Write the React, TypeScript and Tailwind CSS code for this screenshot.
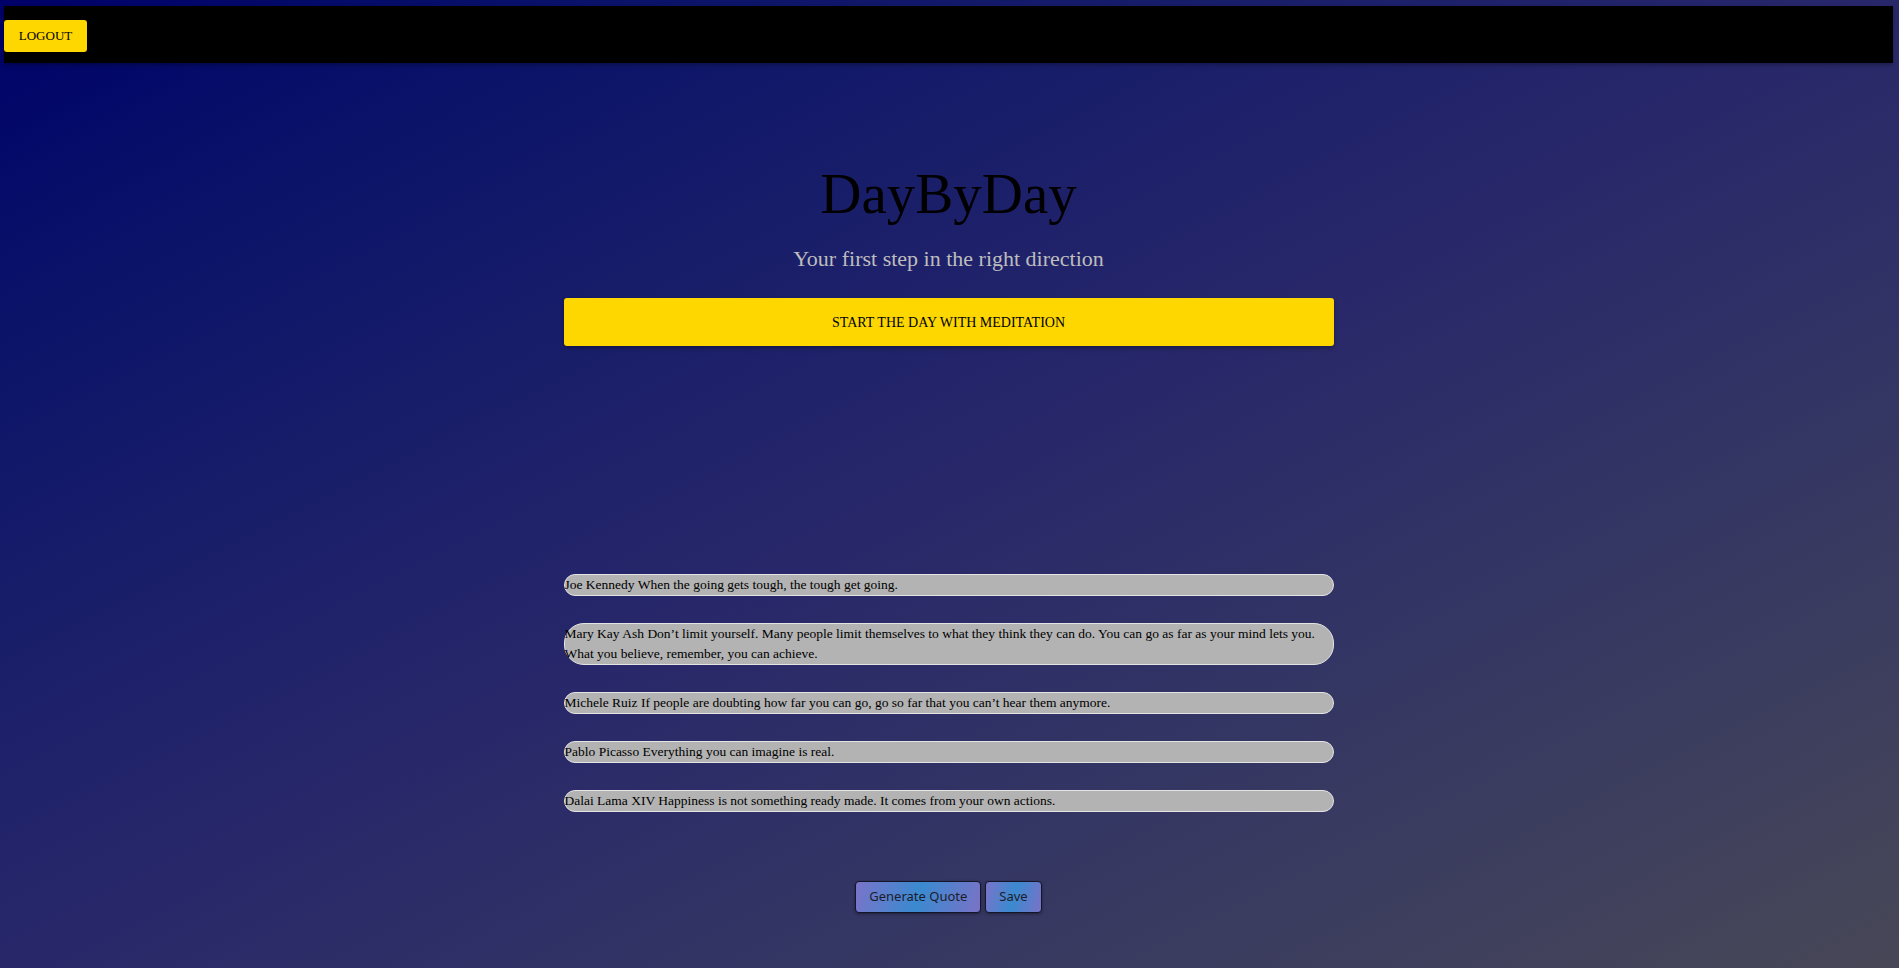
import React from 'react';

const quotes = [
    { author: 'Joe Kennedy', text: 'When the going gets tough, the tough get going.' },
    {
        author: 'Mary Kay Ash',
        text: 'Don’t limit yourself. Many people limit themselves to what they think they can do. You can go as far as your mind lets you. What you believe, remember, you can achieve.'
    },
    { author: 'Michele Ruiz', text: 'If people are doubting how far you can go, go so far that you can’t hear them anymore.' },
    { author: 'Pablo Picasso', text: 'Everything you can imagine is real.' },
    { author: 'Dalai Lama XIV', text: 'Happiness is not something ready made. It comes from your own actions.' }
];

const serif = "font-['Liberation_Serif','Times_New_Roman',serif]";

export default function App() {
    return (
        <div className={`h-[968px] w-full overflow-hidden bg-linear-to-br from-[#000068] via-[#28276a] to-[#484757] ${serif}`}>
            {/* Top bar */}
            <header className="mt-[6px] ml-[4px] mr-[6px] h-[57px] bg-black shadow-[0_2px_4px_rgba(0,0,0,0.3)]">
                <button className="mt-[14px] h-[32px] w-[83px] rounded-[3px] bg-[#ffd700] text-[13px] uppercase text-black shadow-[0_1px_3px_rgba(0,0,0,0.3)]">
                    Logout
                </button>
            </header>

            <main className="mx-auto flex w-[770px] -translate-x-[1px] flex-col items-center">
                <h1 className="mt-[102px] text-[57px] leading-none font-normal text-black">DayByDay</h1>
                <p className="mt-[26px] text-[22px] leading-none text-[#bdbdbd]">Your first step in the right direction</p>

                <button className="mt-[28px] h-[48px] w-full rounded-[3px] bg-[#ffd700] text-[14px] uppercase text-black shadow-[0_2px_4px_rgba(0,0,0,0.35)]">
                    Start the day with meditation
                </button>

                <div className="mt-[228px] flex w-full flex-col gap-[27px]">
                    {quotes.map((q, i) => (
                        <div
                            key={i}
                            className="rounded-[20px] border border-[#e4e4e4] bg-[#b3b3b3] text-left text-[13.5px] leading-[20px] text-black"
                        >
                            {q.author} {q.text}
                        </div>
                    ))}
                </div>

                <div className="mt-[69px] flex gap-[4px] font-['Noto_Sans','Open_Sans',sans-serif] text-[13px] text-[#1c1c2c]">
                    <button className="h-[32px] rounded-[4px] border border-[#15152a] bg-linear-[105deg] from-[#7a74c9] via-[#3a8ad0] to-[#7a72c6] px-[13px] shadow-[0_1px_3px_rgba(0,0,0,0.4)]">
                        Generate Quote
                    </button>
                    <button className="h-[32px] rounded-[4px] border border-[#15152a] bg-linear-[105deg] from-[#7a74c9] via-[#3a8ad0] to-[#7a72c6] px-[13px] shadow-[0_1px_3px_rgba(0,0,0,0.4)]">
                        Save
                    </button>
                </div>
            </main>
        </div>
    );
}
